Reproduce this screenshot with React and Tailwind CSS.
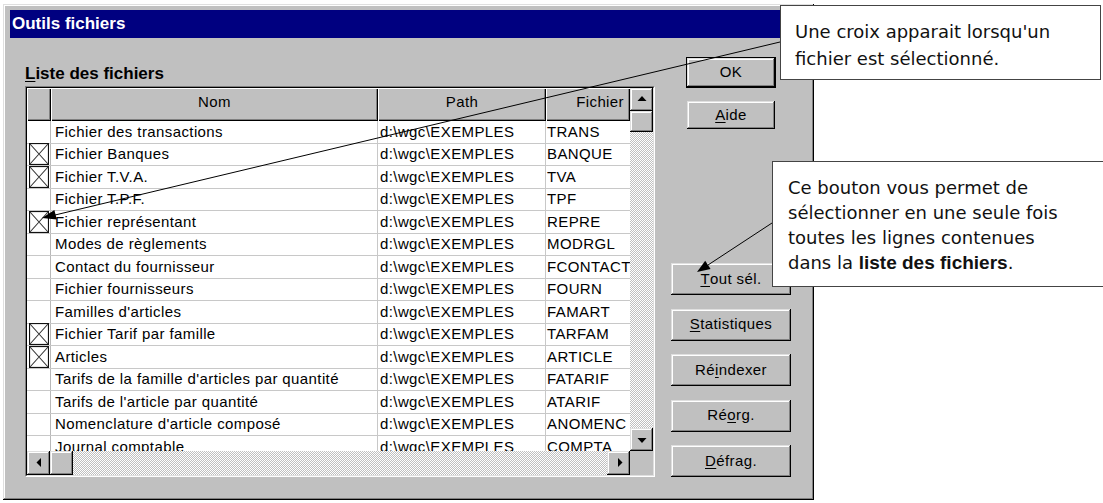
import React from 'react';

// Win95 style raised surfaces
const raised = 'bg-[#c0c0c0] shadow-[inset_-1px_-1px_0_#000,inset_1px_1px_0_#dfdfdf,inset_-2px_-2px_0_#808080,inset_2px_2px_0_#fff]';
const headerCell = 'bg-[#c0c0c0] shadow-[inset_1px_1px_0_#fff,inset_-1px_-1px_0_#000,inset_-2px_-2px_0_#808080]';
const dither = 'bg-[repeating-conic-gradient(#c0c0c0_0%_25%,#ffffff_0%_50%)] bg-[length:2px_2px]';

const rows = [
  ['Fichier des transactions', 'TRANS', false],
  ['Fichier Banques', 'BANQUE', true],
  ['Fichier T.V.A.', 'TVA', true],
  ['Fichier T.P.F.', 'TPF', false],
  ['Fichier représentant', 'REPRE', true],
  ['Modes de règlements', 'MODRGL', false],
  ['Contact du fournisseur', 'FCONTACT', false],
  ['Fichier fournisseurs', 'FOURN', false],
  ["Familles d'articles", 'FAMART', false],
  ['Fichier Tarif par famille', 'TARFAM', true],
  ['Articles', 'ARTICLE', true],
  ["Tarifs de la famille d'articles par quantité", 'FATARIF', false],
  ["Tarifs de l'article par quantité", 'ATARIF', false],
  ["Nomenclature d'article composé", 'ANOMENC', false],
  ['Journal comptable', 'COMPTA', false],
];

const CheckMark = () => (
  <svg width="20" height="22" viewBox="0 0 20 22">
    <rect x="0.5" y="0.5" width="19" height="21" fill="none" stroke="#111" strokeWidth="1.2" />
    <path d="M1 1 L19 21 M19 1 L1 21" stroke="#333" strokeWidth="1.1" />
  </svg>
);

const Arrow = ({ dir }) => {
  const pts = {
    up: '7,8 11.5,13 2.5,13',
    down: '2.5,10 11.5,10 7,15',
    left: '9,7 9,16 4.5,11.5',
    right: '6,7 6,16 10.5,11.5',
  };
  return (
    <svg width="14" height="23" viewBox="0 0 14 23">
      <polygon points={pts[dir]} fill="#000" />
    </svg>
  );
};

const Btn = ({ className, children }) => (
  <div className={`${raised} flex items-center justify-center text-[15px] tracking-[0.4px] text-black ${className}`}>
    {children}
  </div>
);

const U = ({ children }) => <span className="underline underline-offset-2">{children}</span>;

export default function App() {
  return (
    <div className="relative w-[1103px] h-[503px] bg-white overflow-hidden font-['Liberation_Sans',Arial,sans-serif]">
      {/* Dialog */}
      <div className={`ml-[3px] mt-[4px] w-[811px] h-[496px] ${raised} pt-[6px] px-[7px] flex flex-col`}>
        <div className="h-[28px] bg-[#000080] text-white font-bold text-[17px] pl-[2px] flex items-center">
          Outils fichiers
        </div>

        <div className="flex flex-row pl-[15px] pt-[19px]">
          {/* Left: list */}
          <div className="w-[630px] flex flex-col pt-[4px]">
            <div className="h-[25px] leading-[25px] font-bold text-[17px] text-black">
              <U>L</U>iste des fichiers
            </div>

            <div className="h-[391px] border border-t-[#808080] border-l-[#808080] border-b-white border-r-white">
              <div className="h-full border border-t-black border-l-black border-b-[#dfdfdf] border-r-[#dfdfdf] flex flex-col">
                <div className="h-[363px] flex flex-row">
                  <div className="w-[603px] flex flex-col text-[15px] tracking-[0.4px] text-black">
                    <div className="h-[33px] flex flex-row shrink-0">
                      <div className={`w-[24px] ${headerCell}`} />
                      <div className={`w-[327px] ${headerCell} flex items-center justify-center pb-[4px]`}>Nom</div>
                      <div className={`w-[168px] ${headerCell} flex items-center justify-center pb-[4px]`}>Path</div>
                      <div className={`w-[84px] ${headerCell} flex items-center justify-end pr-[6px] pb-[4px]`}>Fichier</div>
                    </div>
                    <div className="flex-1 overflow-hidden bg-white">
                      {rows.map(([nom, fic, checked]) => (
                        <div key={fic} className="h-[22.5px] flex flex-row border-b border-[#c8c8c8]">
                          <div className="w-[24px] border-r border-[#b8b8b8] flex items-center pl-[2px]">
                            {checked && <CheckMark />}
                          </div>
                          <div className="w-[327px] border-r border-[#c8c8c8] pl-[4px] flex items-center whitespace-nowrap overflow-hidden">{nom}</div>
                          <div className="w-[168px] border-r border-[#c8c8c8] pl-[2px] flex items-center whitespace-nowrap overflow-hidden">d:\wgc\EXEMPLES</div>
                          <div className="w-[84px] pl-[1px] flex items-center whitespace-nowrap overflow-hidden">{fic}</div>
                        </div>
                      ))}
                    </div>
                  </div>

                  {/* vertical scrollbar */}
                  <div className="w-[23px] flex flex-col">
                    <div className={`h-[23px] ${raised} flex justify-center`}><Arrow dir="up" /></div>
                    <div className={`h-[21px] ${raised}`} />
                    <div className={`flex-1 ${dither}`} />
                    <div className={`h-[23px] ${raised} flex justify-center`}><Arrow dir="down" /></div>
                  </div>
                </div>

                {/* horizontal scrollbar */}
                <div className="h-[24px] flex flex-row">
                  <div className="w-[603px] flex flex-row">
                    <div className={`w-[23px] ${raised} flex justify-center`}><Arrow dir="left" /></div>
                    <div className={`w-[23px] ${raised}`} />
                    <div className={`flex-1 ${dither}`} />
                    <div className={`w-[23px] ${raised} flex justify-center`}><Arrow dir="right" /></div>
                  </div>
                  <div className="w-[23px] bg-[#c0c0c0]" />
                </div>
              </div>
            </div>
          </div>

          {/* Right: buttons */}
          <div className="ml-[16px] w-[120px] flex flex-col items-center justify-between">
            <div className="flex flex-col items-center gap-[13px]">
              <div className="border border-black">
                <Btn className="w-[88px] h-[29px]">OK</Btn>
              </div>
              <Btn className="w-[88px] h-[28px]"><U>A</U>ide</Btn>
            </div>
            <div className="flex flex-col gap-[13.5px]">
              <Btn className="w-[120px] h-[32px]"><U>T</U>out sél.</Btn>
              <Btn className="w-[120px] h-[32px]"><U>S</U>tatistiques</Btn>
              <Btn className="w-[120px] h-[32px]">Ré<U>i</U>ndexer</Btn>
              <Btn className="w-[120px] h-[32px]">Ré<U>o</U>rg.</Btn>
              <Btn className="w-[120px] h-[32px]"><U>D</U>éfrag.</Btn>
            </div>
          </div>
        </div>
      </div>

      {/* Callout arrows */}
      <svg className="absolute left-0 top-0 pointer-events-none" width="1103" height="503" viewBox="0 0 1103 503">
        <line x1="780" y1="42" x2="55" y2="215" stroke="#000" strokeWidth="1" />
        <polygon points="42,218 56.8,219.6 54.4,209.9" fill="#000" />
        <line x1="772" y1="223" x2="708" y2="265" stroke="#000" strokeWidth="1" />
        <polygon points="697,272 710.6,269.1 705.2,260.7" fill="#000" />
      </svg>

      {/* Callouts */}
      <div className="absolute left-[780px] top-[5px] w-[321px] h-[75px] bg-white border border-[#444] pl-[14px] pt-[12px] font-['DejaVu_Sans',sans-serif] text-[18px] leading-[27px] text-[#111]">
        <div>Une croix apparait lorsqu'un</div>
        <div>fichier est sélectionné.</div>
      </div>
      <div className="absolute left-[772px] top-[161px] w-[332px] h-[126px] bg-white border border-[#444] pl-[15px] pt-[13px] font-['DejaVu_Sans',sans-serif] text-[18px] leading-[25px] text-[#111]">
        <div>Ce bouton vous permet de</div>
        <div>sélectionner en une seule fois</div>
        <div>toutes les lignes contenues</div>
        <div>dans la <span className="font-bold font-['Liberation_Sans',Arial,sans-serif] text-[19px]">liste des fichiers</span>.</div>
      </div>
    </div>
  );
}
